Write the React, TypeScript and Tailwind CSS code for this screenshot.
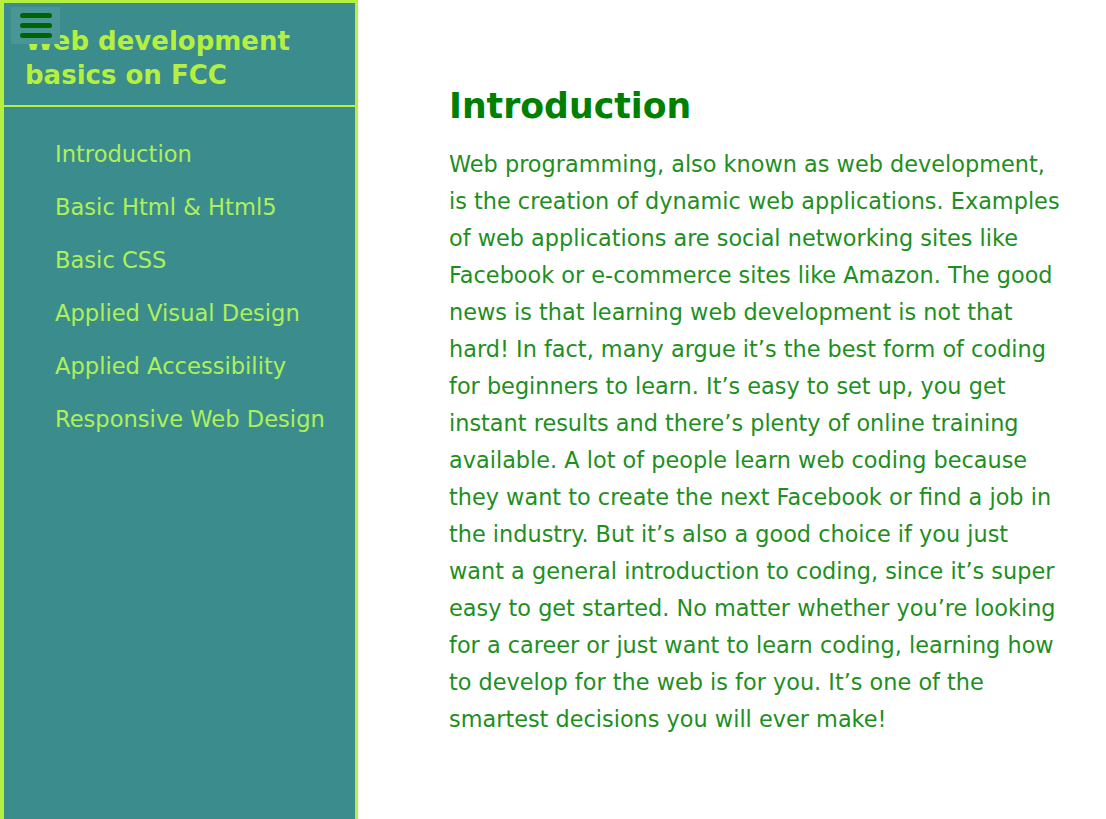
import React from "react";

const nav = [
  "Introduction",
  "Basic Html & Html5",
  "Basic CSS",
  "Applied Visual Design",
  "Applied Accessibility",
  "Responsive Web Design",
];

const lines = [
  "Web programming, also known as web development,",
  "is the creation of dynamic web applications. Examples",
  "of web applications are social networking sites like",
  "Facebook or e-commerce sites like Amazon. The good",
  "news is that learning web development is not that",
  "hard! In fact, many argue it’s the best form of coding",
  "for beginners to learn. It’s easy to set up, you get",
  "instant results and there’s plenty of online training",
  "available. A lot of people learn web coding because",
  "they want to create the next Facebook or find a job in",
  "the industry. But it’s also a good choice if you just",
  "want a general introduction to coding, since it’s super",
  "easy to get started. No matter whether you’re looking",
  "for a career or just want to learn coding, learning how",
  "to develop for the web is for you. It’s one of the",
  "smartest decisions you will ever make!",
];

export default function App() {
  return (
    <div
      className="flex h-[819px] w-full overflow-hidden bg-white"
      style={{ fontFamily: '"DejaVu Sans", sans-serif' }}
    >
      <aside className="relative flex h-full w-[358px] shrink-0 flex-col border-[4px] border-t-[3px] border-r-[3px] border-b-0 border-[#b5f040] bg-[#3b8c8c]">
        <button className="absolute left-[7px] top-[4px] flex h-[37px] w-[49px] flex-col items-center justify-center gap-[5px] bg-[#4a9595]">
          <span className="block h-[5px] w-[32px] rounded-full bg-[#006400]" />
          <span className="block h-[5px] w-[32px] rounded-full bg-[#006400]" />
          <span className="block h-[5px] w-[32px] rounded-full bg-[#006400]" />
        </button>
        <header className="border-b-2 border-[#b5f040] px-[21px] pt-[21px] pb-[13px]">
          <h1 className="text-[26px] font-bold leading-[34px] text-[#b5f040]">
            Web development basics on FCC
          </h1>
        </header>
        <nav className="flex flex-col pl-[51px] pt-[32px]">
          {nav.map((n) => (
            <a key={n} className="block h-[53px] text-[22.6px] leading-[30px] text-[#aef05a]">
              {n}
            </a>
          ))}
        </nav>
      </aside>
      <main className="flex-1 pl-[91px] pt-[82px]">
        <h2 className="text-[34.7px] font-bold leading-[48px] text-[#008000]">Introduction</h2>
        <p className="mt-[16px] text-[22.4px] leading-[37px] text-[#1e8f1e]">
          {lines.map((l, i) => (
            <span key={i} className="block whitespace-nowrap">
              {l}
            </span>
          ))}
        </p>
      </main>
    </div>
  );
}
